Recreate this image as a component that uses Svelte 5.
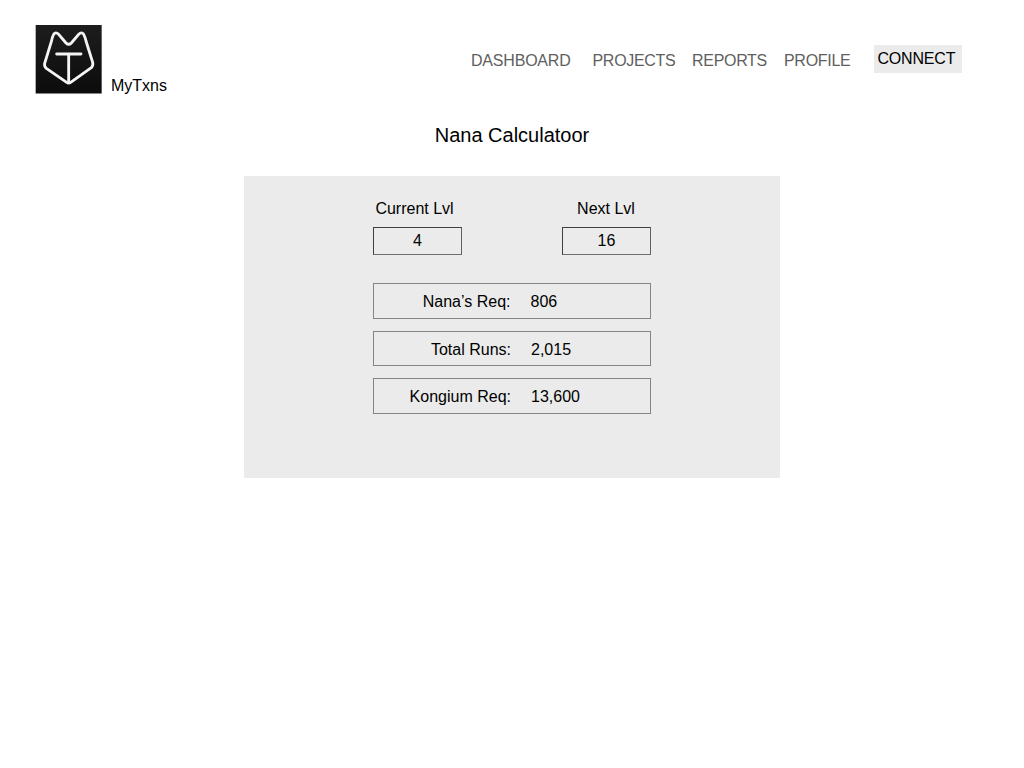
<script>
  const links = ['DASHBOARD', 'PROJECTS', 'REPORTS', 'PROFILE'];
  let levels = $state([
    { id: 'current', label: 'Current Lvl', value: '4' },
    { id: 'next', label: 'Next Lvl', value: '16' }
  ]);
  let results = $state([
    { label: 'Nana’s Req:', value: '806' },
    { label: 'Total Runs:', value: '2,015' },
    { label: 'Kongium Req:', value: '13,600' }
  ]);
</script>

<div class="page">
  <header>
    <div class="brand">
      <svg class="logo" viewBox="15 15 201 207" aria-hidden="true">
        <defs>
          <linearGradient id="tile" x1="0" y1="0" x2="0" y2="1">
            <stop offset="0" stop-color="#1d1d1d" />
            <stop offset="1" stop-color="#0c0c0c" />
          </linearGradient>
        </defs>
        <rect x="17" y="15" width="198" height="205.5" fill="url(#tile)" />
        <g fill="none" stroke="#f4f4f4" stroke-width="8.5" stroke-linecap="round" stroke-linejoin="round">
          <path d="M86 43 L108 69 Q116 77 124 69 L146 43 Q155 34 161 43 Q165 50 168 63 L188 127 Q190 137 184 143 L122 187 Q116 191 110 187 L49 145 Q42 139 44 130 L64 65 Q67 50 71 43 Q77 34 86 43 Z" />
          <path d="M80 102 H153 M116 102 V187" />
        </g>
      </svg>
      <span>MyTxns</span>
    </div>
    <nav>
      {#each links as link}
        <a href="#{link.toLowerCase()}" class={link.toLowerCase()}>{link}</a>
      {/each}
    </nav>
    <button>CONNECT</button>
  </header>

  <h1>Nana Calculatoor</h1>

  <main>
    <div class="levels">
      {#each levels as level}
        <div class="level {level.id}">
          <span class="label">{level.label}</span>
          <span class="box">{level.value}</span>
        </div>
      {/each}
    </div>
    <div class="results">
      {#each results as row}
        <div class="row">
          <span class="name">{row.label}</span>
          <span class="value">{row.value}</span>
        </div>
      {/each}
    </div>
  </main>
</div>

<style>
  :global(body) {
    margin: 0;
    background: #fff;
  }
  .page {
    width: 1024px;
    height: 768px;
    overflow: hidden;
    box-sizing: border-box;
    padding-top: 25px;
    font: 16px/20px "Liberation Sans", Arial, sans-serif;
    color: #000;
  }
  header {
    display: flex;
    align-items: flex-start;
    height: 69px;
    padding: 0 62px 0 35px;
  }
  .brand {
    display: flex;
    align-items: flex-end;
    gap: 9px;
  }
  .brand span {
    margin-bottom: -2px;
  }
  .logo {
    display: block;
    width: 67px;
    height: 69px;
  }
  nav {
    display: flex;
    margin: 26px 0 0 auto;
  }
  nav a {
    color: #606060;
    text-decoration: none;
    box-sizing: border-box;
    letter-spacing: -0.3px;
  }
  .dashboard { width: 121.5px; letter-spacing: -0.2px; }
  .projects { width: 99.5px; }
  .reports { width: 92px; }
  .profile { width: 90px; }
  button {
    width: 88px;
    height: 28px;
    margin: 20px 0 0;
    padding: 0 0 0 3.5px;
    border: 0;
    background: #ebebeb;
    color: #000;
    font: inherit;
    letter-spacing: -0.2px;
    text-align: left;
  }
  h1 {
    margin: 29px 0 0;
    font-size: 20px;
    line-height: 24px;
    font-weight: 400;
    text-align: center;
  }
  main {
    box-sizing: border-box;
    width: 536px;
    height: 302px;
    margin: 29px auto 0;
    padding: 23px 129px 0;
    background: #ebebeb;
  }
  .levels {
    display: flex;
    justify-content: space-between;
  }
  .level {
    width: 89px;
  }
  .label {
    display: block;
    text-align: center;
    margin-left: -6px;
  }
  .next .label {
    margin-left: -1px;
  }
  .box {
    display: block;
    box-sizing: border-box;
    height: 28px;
    margin-top: 8px;
    border: 1px solid #404040;
    border-right-color: #606060;
    border-bottom-color: #707070;
    line-height: 26px;
    text-align: center;
  }
  .results {
    display: grid;
    gap: 12px;
    margin-top: 28px;
  }
  .row {
    display: grid;
    grid-template-columns: 136.5px 1fr;
    column-gap: 20px;
    box-sizing: border-box;
    height: 35.5px;
    border: 1px solid #858585;
    line-height: 35px;
  }
  .row:first-child {
    line-height: 36px;
  }
  .row:not(:first-child) {
    grid-template-columns: 137px 1fr;
  }
  .name {
    text-align: right;
  }
</style>
